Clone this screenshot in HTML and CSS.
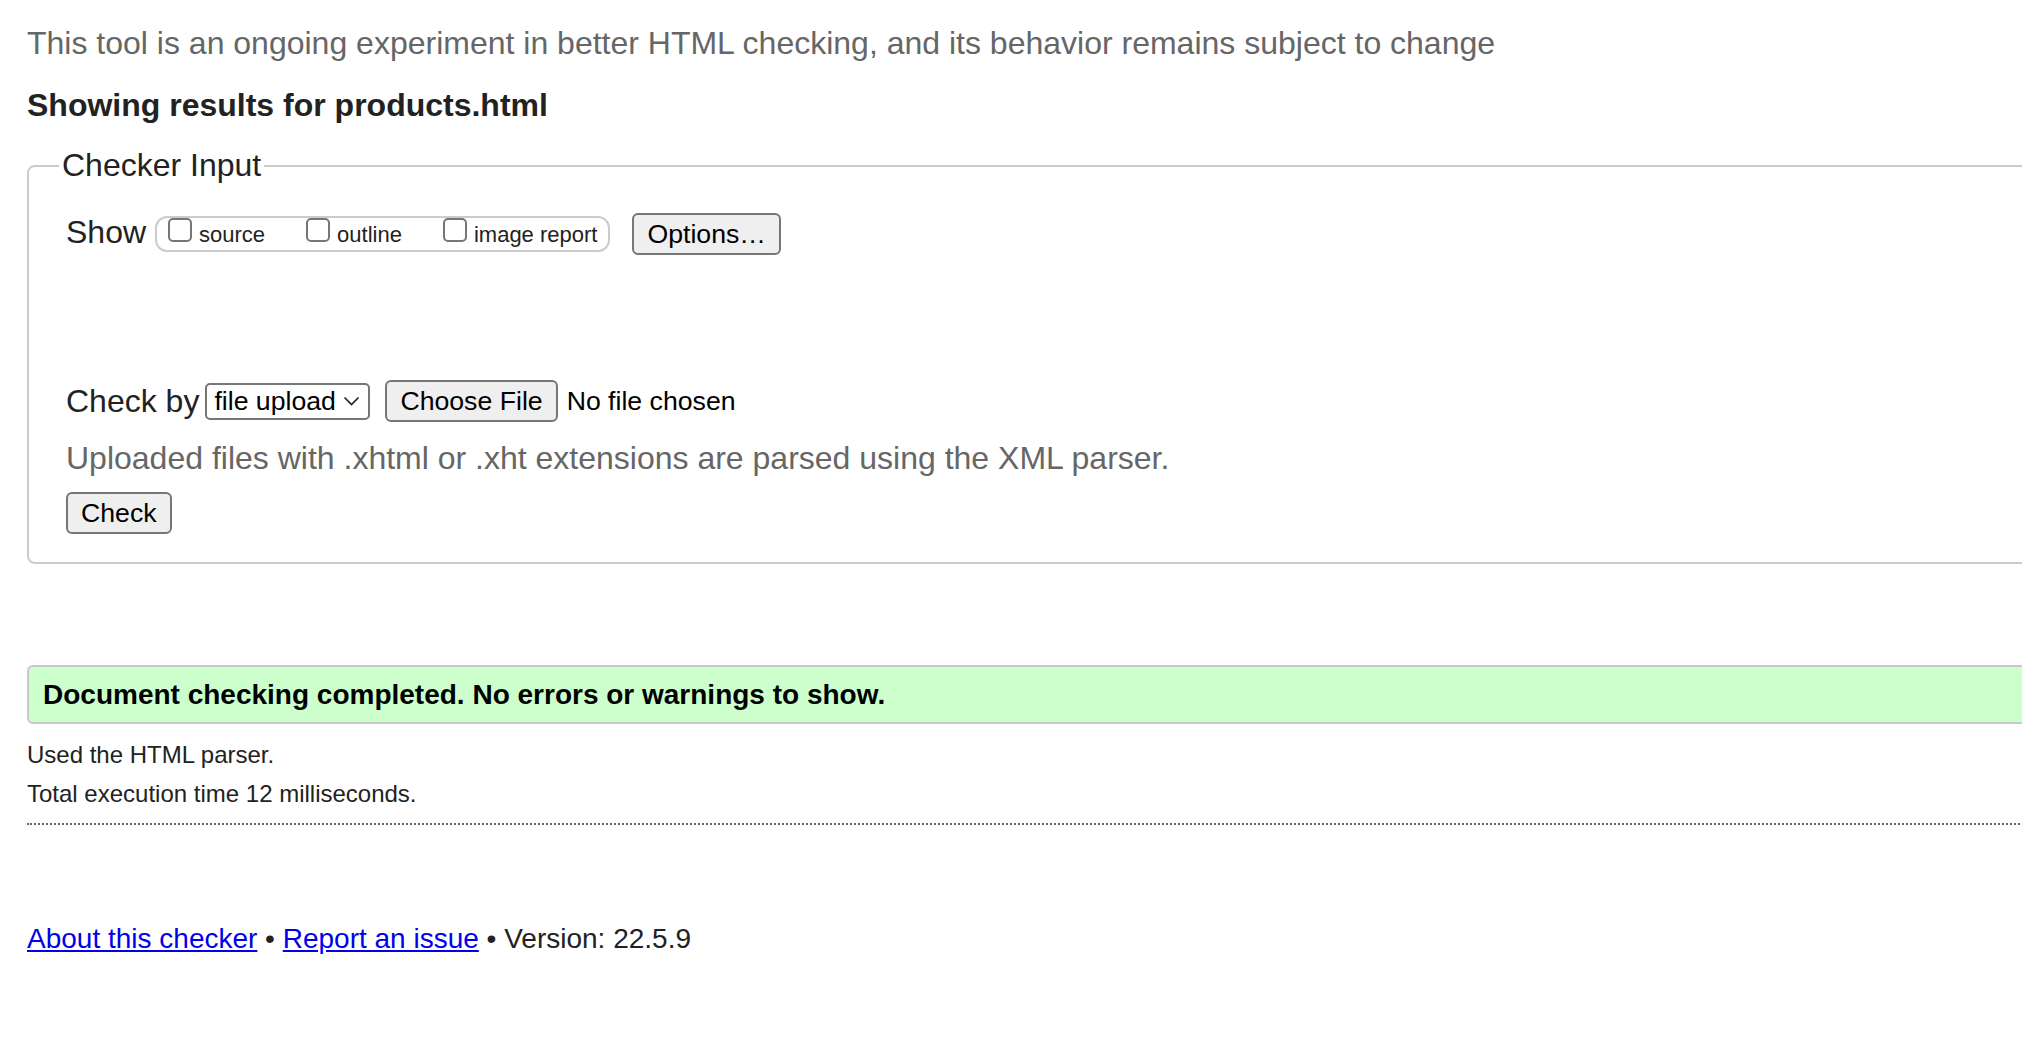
FILE: index.html
```html
<!DOCTYPE html>
<html lang="en">
<head>
<meta charset="utf-8">
<title>Nu Html Checker</title>
<link rel="stylesheet" href="styles.css">
</head>
<body>
<div class="page">
  <p class="intro">This tool is an ongoing experiment in better HTML checking, and its behavior remains subject to change</p>
  <p class="showing">Showing results for products.html</p>
  <form class="form">
    <fieldset class="checker">
      <legend class="legend">Checker Input</legend>
      <div class="row">
        <span class="label label-show">Show</span>
        <span class="opts">
          <label class="opt"><input class="cb" type="checkbox">source</label>
          <label class="opt"><input class="cb" type="checkbox">outline</label>
          <label class="opt"><input class="cb" type="checkbox">image report</label>
        </span>
        <button type="button" class="btn btn-options">Options…</button>
      </div>
      <div class="row row-checkby">
        <span class="label label-checkby">Check by</span>
        <span class="select">
          <span class="select-text">file upload</span>
          <svg class="chev" width="17" height="10" viewBox="0 0 17 10"><polyline points="1.5,1.5 8.5,8.5 15.5,1.5" fill="none" stroke="#222" stroke-width="1.7"/></svg>
        </span>
        <button type="button" class="btn btn-file">Choose File</button>
        <span class="nofile">No file chosen</span>
      </div>
      <p class="note">Uploaded files with .xhtml or .xht extensions are parsed using the XML parser.</p>
      <button type="button" class="btn btn-check">Check</button>
    </fieldset>
  </form>
  <div class="success"><p class="success-text">Document checking completed. No errors or warnings to show.</p></div>
  <div class="meta">
    <p class="meta-line">Used the HTML parser.</p>
    <p class="meta-line">Total execution time 12 milliseconds.</p>
  </div>
  <div class="dotted"></div>
  <p class="footer"><a class="link" href="#">About this checker</a> • <a class="link" href="#">Report an issue</a> • Version: 22.5.9</p>
</div>
</body>
</html>
```
FILE: styles.css
```css
html {
  overflow: hidden;
}
body {
  margin: 0;
  background: #fff;
  color: #222;
  font-family: "Liberation Sans", Arial, Helvetica, sans-serif;
}
.page {
  width: 2200px;
  padding: 0 0 0 27px;
}
.intro {
  margin: 23px 0 0;
  font-size: 32px;
  line-height: 40px;
  color: #666;
}
.showing {
  margin: 22px 0 0;
  font-size: 32px;
  line-height: 40px;
  font-weight: bold;
}
.form {
  margin: 0;
}
.checker {
  margin: 21px 0 0;
  border: 2px solid #ccc;
  border-radius: 8px;
  padding: 27px 0 28px 37px;
  min-width: 0;
}
.legend {
  font-size: 32px;
  line-height: 40px;
  padding: 0 3px;
  margin-left: -7px;
  position: relative;
  top: -1px;
}
.row {
  display: flex;
  align-items: center;
  height: 42px;
}
.row-checkby {
  margin-top: 125px;
}
.label {
  font-size: 32px;
  line-height: 40px;
}
.label-show {
  margin-bottom: 5px;
}
.opts {
  display: flex;
  align-items: center;
  gap: 41px;
  box-sizing: border-box;
  height: 36px;
  margin-left: 9px;
  padding: 2px 11px 0;
  border: 2px solid #ccc;
  border-radius: 12px;
  font-size: 22px;
  line-height: 26px;
}
.opt {
  display: flex;
  align-items: center;
}
.cb {
  appearance: none;
  -webkit-appearance: none;
  box-sizing: border-box;
  width: 24px;
  height: 24px;
  margin: 0 7px 10px 0;
  border: 2px solid #767676;
  border-radius: 5px;
  background: #fff;
}
.btn {
  box-sizing: border-box;
  height: 42px;
  padding: 0 13px;
  border: 2px solid #767676;
  border-radius: 6px;
  background: #efefef;
  color: #000;
  font-family: "Liberation Sans", Arial, Helvetica, sans-serif;
  font-size: 26.67px;
  line-height: 30px;
}
.btn-options {
  margin-left: 22px;
}
.select {
  display: flex;
  align-items: center;
  box-sizing: border-box;
  width: 165px;
  height: 37px;
  margin-left: 6px;
  padding: 0 8px 0 7px;
  border: 2px solid #767676;
  border-radius: 5px;
  background: #fff;
  color: #000;
  font-size: 26.67px;
  line-height: 30px;
}
.select-text {
  flex: 1;
}
.chev {
  display: block;
}
.btn-file {
  margin-left: 15px;
}
.nofile {
  margin-left: 9px;
  font-size: 26.67px;
  line-height: 30px;
  color: #000;
}
.note {
  margin: 16px 0 0;
  font-size: 32px;
  line-height: 40px;
  color: #666;
}
.btn-check {
  display: block;
  margin-top: 14px;
}
.success {
  margin-top: 101px;
  border: 2px solid #c8c8c8;
  border-radius: 6px;
  background: #ccffcc;
  padding: 12px 12px 11px 14px;
}
.success-text {
  margin: 0;
  font-size: 28px;
  line-height: 32px;
  font-weight: bold;
  color: #000;
}
.meta {
  display: flex;
  flex-direction: column;
  gap: 7px;
  margin-top: 15px;
}
.meta-line {
  margin: 0;
  font-size: 24px;
  line-height: 32px;
}
.dotted {
  margin-top: 13px;
  border-bottom: 2px dotted #666;
}
.footer {
  margin: 98px 0 0;
  font-size: 28px;
  line-height: 32px;
}
.link {
  color: #0000ee;
  text-decoration: underline;
}
```
